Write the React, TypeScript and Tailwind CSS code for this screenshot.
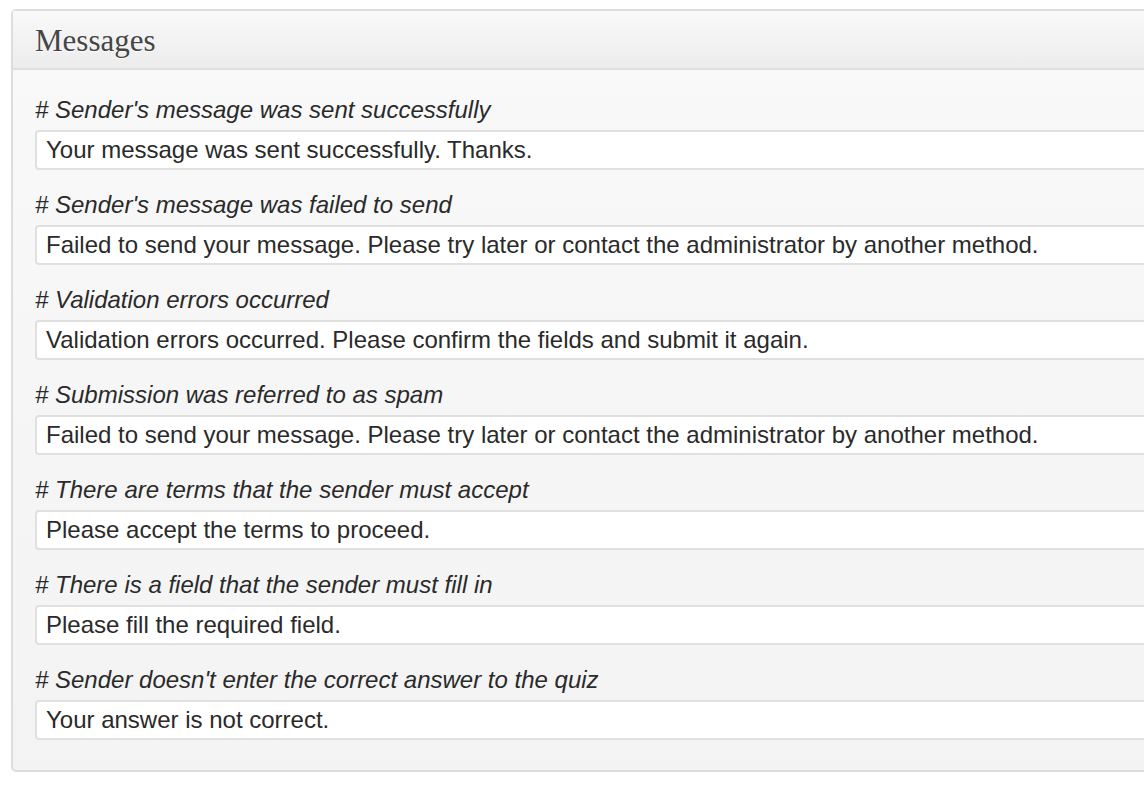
const messages = [
  {
    label: "# Sender's message was sent successfully",
    value: "Your message was sent successfully. Thanks.",
  },
  {
    label: "# Sender's message was failed to send",
    value:
      "Failed to send your message. Please try later or contact the administrator by another method.",
  },
  {
    label: "# Validation errors occurred",
    value:
      "Validation errors occurred. Please confirm the fields and submit it again.",
  },
  {
    label: "# Submission was referred to as spam",
    value:
      "Failed to send your message. Please try later or contact the administrator by another method.",
  },
  {
    label: "# There are terms that the sender must accept",
    value: "Please accept the terms to proceed.",
  },
  {
    label: "# There is a field that the sender must fill in",
    value: "Please fill the required field.",
  },
  {
    label: "# Sender doesn't enter the correct answer to the quiz",
    value: "Your answer is not correct.",
  },
];

export default function App() {
  return (
    <div className="h-[786px] w-[1144px] overflow-hidden bg-white pl-[11px] pt-[9px] font-['Liberation_Sans',Arial,sans-serif]">
      {/* ── Postbox ─────────────────────────────────── */}
      <div className="w-[1200px] rounded-[5px] border-2 border-[#dddddd] bg-gradient-to-b from-[#f9f9f9] to-[#f3f3f3]">
        <div className="flex h-[59px] items-center border-b-2 border-[#dfdfdf] bg-gradient-to-b from-[#f9f9f9] to-[#ececec] pl-[22px]">
          <h3 className="pt-[2px] font-['Liberation_Serif','DejaVu_Serif',serif] text-[31px] leading-none text-[#464646] [text-shadow:0_1px_0_#fff]">
            Messages
          </h3>
        </div>

        <div className="flex flex-col gap-[19px] pb-[30px] pl-[22px] pt-[24px]">
          {messages.map((m, i) => (
            <div key={i} className="flex flex-col gap-[5px]">
              <p className="text-[24px] italic leading-[31px] text-[#2a2a2a]">
                {m.label}
              </p>
              <input
                type="text"
                defaultValue={m.value}
                className="h-[40px] w-full rounded-[4px] border-2 border-[#e0e0e0] bg-white pl-[9px] text-[24px] text-[#2a2a2a] outline-none"
              />
            </div>
          ))}
        </div>
      </div>
    </div>
  );
}
